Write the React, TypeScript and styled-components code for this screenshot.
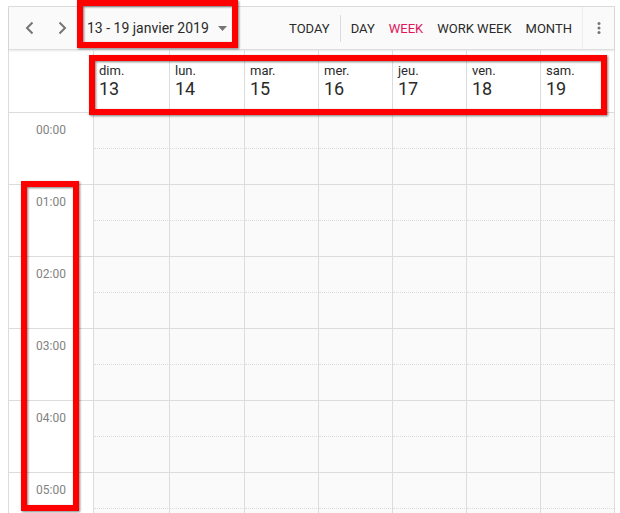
import React from 'react';
import styled, { createGlobalStyle, css } from 'styled-components';

const GlobalStyle = createGlobalStyle`
  *, *::before, *::after { box-sizing: border-box; }
  body {
    margin: 0;
    background: #fff;
    color: #2a2a2a;
    font-family: Roboto, "Liberation Sans", sans-serif;
    overflow: hidden;
  }
`;

const line = '#dcdcdc';

const Page = styled.main`
  height: 100vh;
  padding: 6px 5px 0 8px;
  overflow: hidden;
`;

const Scheduler = styled.section`
  border: 1px solid ${line};
`;

const Toolbar = styled.header`
  position: relative;
  display: flex;
  align-items: center;
  justify-content: space-between;
  height: 43px;
  background: #fafafa;
  border-bottom: 1px solid #dedede;
  box-shadow: 0 1px 2px rgba(0, 0, 0, 0.1);
`;

const Group = styled.div`
  display: flex;
  align-items: center;
  height: 100%;
`;

const plainButton = css`
  display: flex;
  align-items: center;
  justify-content: center;
  padding: 0;
  border: 0;
  background: none;
  color: inherit;
  font: inherit;
  cursor: pointer;
`;

const IconButton = styled.button`
  ${plainButton}
  width: 33px;
  height: 40px;
  color: #757575;
`;

const NavGroup = styled(Group)`
  padding-left: 4px;
`;

const DateButton = styled.button`
  ${plainButton}
  position: relative;
  gap: 9px;
  height: 40px;
  padding: 0 8px;
  font-size: 14px;
  white-space: nowrap;
`;

const ViewButton = styled.button<{ $active?: boolean }>`
  ${plainButton}
  height: 40px;
  padding: 0 7px;
  font-size: 13px;
  white-space: nowrap;
  color: ${(p) => (p.$active ? '#e3165b' : 'inherit')};
`;

const Divider = styled.span`
  width: 1px;
  height: 27px;
  margin: 0 3px;
  background: ${line};
`;

const MoreButton = styled(IconButton)`
  width: 32px;
  height: 100%;
  margin-left: 3px;
  border-left: 1px solid #eee;
`;

const CalendarArea = styled.div`
  position: relative;
`;

const Calendar = styled.table`
  display: grid;
  grid-template-columns: 85px 76fr 75fr repeat(4, 74fr) 73fr;

  thead, tbody, tr { display: contents; }
`;

const Corner = styled.td`
  height: 63px;
  padding: 0;
  border-right: 1px solid ${line};
  border-bottom: 1px solid ${line};
`;

const DayHeader = styled.th`
  height: 63px;
  padding: 13px 0 0 5px;
  border-right: 1px solid ${line};
  border-bottom: 1px solid ${line};
  text-align: left;
  font-weight: 400;

  &:last-child { border-right: 0; }
`;

const DayName = styled.div`
  font-size: 13px;
  line-height: 16px;
`;

const DayNumber = styled.div`
  font-size: 18px;
  line-height: 20px;
`;

const HourLabel = styled.th`
  grid-row: span 2;
  padding: 9px 0 0;
  border-right: 1px solid ${line};
  border-bottom: 1px solid ${line};
  color: #828282;
  font-size: 12px;
  font-weight: 400;
  line-height: 16px;
`;

const Slot = styled.td<{ $half?: boolean }>`
  height: 36px;
  padding: 0;
  background: #fafafa;
  border-right: 1px solid ${line};
  border-bottom: 1px ${(p) => (p.$half ? 'dotted' : 'solid')} ${line};

  &:last-child { border-right: 0; }
`;

const Highlight = styled.span`
  position: absolute;
  z-index: 2;
  border: 6px solid #f00;
  filter: drop-shadow(1px 1px 1px rgba(0, 0, 0, 0.5));
  pointer-events: none;
`;

const DateHighlight = styled(Highlight)`
  inset: -8px -3px 0 -2px;
`;

const DaysHighlight = styled(Highlight)`
  top: 5px;
  left: 80px;
  right: 7px;
  height: 60px;
`;

const HoursHighlight = styled(Highlight)`
  top: 131px;
  left: 12px;
  width: 58px;
  height: 330px;
`;

const days = [
  ['dim.', 13],
  ['lun.', 14],
  ['mar.', 15],
  ['mer.', 16],
  ['jeu.', 17],
  ['ven.', 18],
  ['sam.', 19],
] as const;

const hours = ['00:00', '01:00', '02:00', '03:00', '04:00', '05:00'];

const views = ['DAY', 'WEEK', 'WORK WEEK', 'MONTH'];

function Chevron({ d }: { d: string }) {
  return (
    <svg width="10" height="14" viewBox="0 0 10 14" fill="none" stroke="currentColor" strokeWidth="2" aria-hidden="true">
      <path d={d} />
    </svg>
  );
}

export default function App() {
  return (
    <Page>
      <GlobalStyle />
      <Scheduler>
        <Toolbar>
          <NavGroup>
            <IconButton aria-label="Previous">
              <Chevron d="M7.500 1.500 2 7l5.500 5.500" />
            </IconButton>
            <IconButton aria-label="Next">
              <Chevron d="M1.500 1.500 7 7l-5.500 5.500" />
            </IconButton>
            <DateButton>
              13 - 19 janvier 2019
              <svg width="9" height="5" viewBox="0 0 9 5" fill="#757575" aria-hidden="true">
                <path d="M0 0h9L4.500 5z" />
              </svg>
              <DateHighlight />
            </DateButton>
          </NavGroup>
          <Group>
            <ViewButton>TODAY</ViewButton>
            <Divider />
            {views.map((view) => (
              <ViewButton key={view} $active={view === 'WEEK'} aria-pressed={view === 'WEEK'}>
                {view}
              </ViewButton>
            ))}
            <MoreButton aria-label="More">
              <svg width="4" height="12" viewBox="0 0 4 12" fill="currentColor" aria-hidden="true">
                <circle cx="2" cy="1.600" r="1.500" />
                <circle cx="2" cy="6" r="1.500" />
                <circle cx="2" cy="10.400" r="1.500" />
              </svg>
            </MoreButton>
          </Group>
        </Toolbar>
        <CalendarArea>
          <Calendar>
            <thead>
              <tr>
                <Corner />
                {days.map(([name, number]) => (
                  <DayHeader key={name} scope="col">
                    <DayName>{name}</DayName>
                    <DayNumber>{number}</DayNumber>
                  </DayHeader>
                ))}
              </tr>
            </thead>
            <tbody>
              {hours.map((hour) => (
                <React.Fragment key={hour}>
                  <tr>
                    <HourLabel rowSpan={2} scope="rowgroup">
                      {hour}
                    </HourLabel>
                    {days.map(([name]) => (
                      <Slot key={name} $half />
                    ))}
                  </tr>
                  <tr>
                    {days.map(([name]) => (
                      <Slot key={name} />
                    ))}
                  </tr>
                </React.Fragment>
              ))}
            </tbody>
          </Calendar>
          <DaysHighlight />
          <HoursHighlight />
        </CalendarArea>
      </Scheduler>
    </Page>
  );
}
